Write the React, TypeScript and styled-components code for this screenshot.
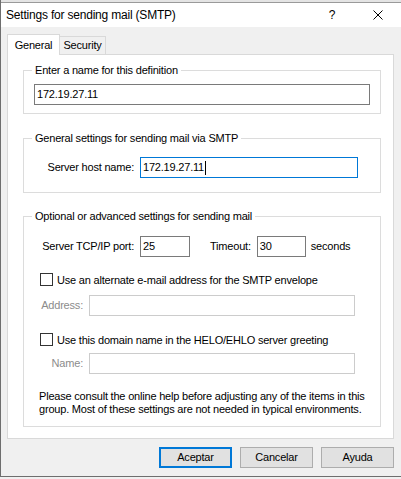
import React from "react";
import styled, { createGlobalStyle, css } from "styled-components";

const GlobalStyle = createGlobalStyle`
  *, *::before, *::after { box-sizing: border-box; }
  html, body { margin: 0; padding: 0; background: #f0f0f0; }
  body {
    font-family: "Liberation Sans", Arial, sans-serif;
    font-size: 11px;
    letter-spacing: -0.2px;
    color: #000;
  }
`;

const Screen = styled.div`
  width: 401px;
  height: 479px;
  overflow: hidden;
  background: #f0f0f0;
`;

const Window = styled.div`
  width: 401px;
  height: 477px;
  border-left: 1px solid #6e6e6e;
  border-bottom: 1px solid #6e6e6e;
  display: flex;
  flex-direction: column;
  background: #f0f0f0;
`;

const BackStrip = styled.div`
  height: 3px;
  background: #e4e4e4;
  border-bottom: 1px solid #9a9a9a;
`;

const TitleBar = styled.div`
  height: 24px;
  background: #fff;
  display: flex;
  align-items: center;
  padding-left: 5px;
`;

const Title = styled.div`
  flex: 1;
  font-size: 12px;
  line-height: 16px;
`;

const TitleButton = styled.div`
  width: 46px;
  height: 24px;
  display: flex;
  align-items: center;
  justify-content: center;
  font-size: 12px;
`;

const Body = styled.div`
  flex: 1;
  display: flex;
  flex-direction: column;
  padding: 7px 7px 8px 6px;
`;

const TabStrip = styled.div`
  display: flex;
  align-items: flex-end;
  height: 20px;
`;

const Tab = styled.div<{ $active?: boolean }>`
  display: flex;
  align-items: center;
  justify-content: center;
  border: 1px solid #d9d9d9;
  border-bottom: none;
  line-height: 13px;
  ${(p) =>
    p.$active
      ? css`
          width: 53px;
          height: 21px;
          margin-bottom: -1px;
          background: #fff;
          position: relative;
          z-index: 1;
        `
      : css`
          width: 46px;
          height: 18px;
          border-left: none;
          background: #f0f0f0;
        `}
`;

const Panel = styled.div`
  height: 385px;
  border: 1px solid #d9d9d9;
  background: #fff;
  padding: 9px 12px 0 15px;
  display: flex;
  flex-direction: column;
`;

const Group = styled.div<{ $gap?: number }>`
  margin-top: ${(p) => p.$gap ?? 0}px;
  display: flex;
  flex-direction: column;
`;

const GroupHeader = styled.div`
  display: flex;
  height: 13px;
  &::before,
  &::after {
    content: "";
    align-self: flex-end;
    height: 7px;
    border-top: 1px solid #dcdcdc;
  }
  &::before {
    width: 9px;
    border-left: 1px solid #dcdcdc;
  }
  &::after {
    flex: 1;
    border-right: 1px solid #dcdcdc;
  }
`;

const Caption = styled.span`
  padding: 0 3px;
  line-height: 13px;
`;

const GroupBody = styled.div<{ $pad: string }>`
  border: 1px solid #dcdcdc;
  border-top: none;
  padding: ${(p) => p.$pad};
  display: flex;
  flex-direction: column;
`;

const TextBox = styled.div<{ $w?: number; $kind?: "normal" | "focus" | "disabled" }>`
  width: ${(p) => (p.$w ? `${p.$w}px` : "100%")};
  height: 21px;
  background: #fff;
  border: 1px solid
    ${(p) => (p.$kind === "focus" ? "#0078d7" : p.$kind === "disabled" ? "#cccccc" : "#7a7a7a")};
  display: flex;
  align-items: center;
  padding-left: 2px;
  line-height: 13px;
  white-space: nowrap;
`;

const Caret = styled.span`
  display: inline-block;
  width: 1px;
  height: 14px;
  background: #000;
  margin-left: 1px;
`;

const FieldRow = styled.div<{ $mt?: number }>`
  display: flex;
  align-items: center;
  margin-top: ${(p) => p.$mt ?? 0}px;
`;

const FieldLabel = styled.span<{ $w?: number; $ml?: number; $muted?: boolean }>`
  ${(p) => (p.$w ? `width: ${p.$w}px; text-align: right;` : "")}
  margin-left: ${(p) => p.$ml ?? 0}px;
  margin-right: 6px;
  line-height: 13px;
  white-space: nowrap;
  color: ${(p) => (p.$muted ? "#8c8c8c" : "#000")};
`;

const Suffix = styled.span`
  margin-left: 5px;
  line-height: 13px;
`;

const CheckRow = styled.div<{ $mt?: number }>`
  display: flex;
  align-items: center;
  margin-top: ${(p) => p.$mt ?? 0}px;
  padding-left: 16px;
  height: 13px;
`;

const CheckBox = styled.span`
  width: 13px;
  height: 13px;
  border: 1px solid #333;
  background: #fff;
  margin-right: 4px;
  flex: none;
`;

const Note = styled.p<{ $mt?: number }>`
  margin: ${(p) => p.$mt ?? 0}px 0 0 0;
  padding-left: 15px;
  line-height: 13px;
`;

const ButtonRow = styled.div`
  display: flex;
  justify-content: flex-end;
  gap: 8px;
  margin-top: 8px;
`;

const Button = styled.div<{ $default?: boolean }>`
  width: 73px;
  height: 21px;
  display: flex;
  align-items: center;
  justify-content: center;
  background: #e1e1e1;
  border: ${(p) => (p.$default ? "2px solid #0078d7" : "1px solid #adadad")};
  line-height: 13px;
`;

const CloseIcon = () => (
  <svg width="10" height="10" viewBox="0 0 10 10">
    <path d="M0.5 0.5 L9.5 9.5 M9.5 0.5 L0.5 9.5" stroke="#000" strokeWidth="1" fill="none" />
  </svg>
);

export default function App() {
  return (
    <Screen>
      <GlobalStyle />
      <Window>
        <BackStrip />
        <TitleBar>
          <Title>Settings for sending mail (SMTP)</Title>
          <TitleButton>?</TitleButton>
          <TitleButton>
            <CloseIcon />
          </TitleButton>
        </TitleBar>
        <Body>
          <TabStrip>
            <Tab $active>General</Tab>
            <Tab>Security</Tab>
          </TabStrip>
          <Panel>
            <Group>
              <GroupHeader>
                <Caption>Enter a name for this definition</Caption>
              </GroupHeader>
              <GroupBody $pad="7px 10px 8px 10px">
                <TextBox>172.19.27.11</TextBox>
              </GroupBody>
            </Group>

            <Group $gap={18}>
              <GroupHeader>
                <Caption>General settings for sending mail via SMTP</Caption>
              </GroupHeader>
              <GroupBody $pad="12px 0 14px 0">
                <FieldRow>
                  <FieldLabel $w={110}>Server host name:</FieldLabel>
                  <TextBox $w={218} $kind="focus">
                    172.19.27.11
                    <Caret />
                  </TextBox>
                </FieldRow>
              </GroupBody>
            </Group>

            <Group $gap={17}>
              <GroupHeader>
                <Caption>Optional or advanced settings for sending mail</Caption>
              </GroupHeader>
              <GroupBody $pad="13px 0 10px 0">
                <FieldRow>
                  <FieldLabel $w={110}>Server TCP/IP port:</FieldLabel>
                  <TextBox $w={50}>25</TextBox>
                  <FieldLabel $ml={20}>Timeout:</FieldLabel>
                  <TextBox $w={49}>30</TextBox>
                  <Suffix>seconds</Suffix>
                </FieldRow>
                <CheckRow $mt={16}>
                  <CheckBox />
                  Use an alternate e-mail address for the SMTP envelope
                </CheckRow>
                <FieldRow $mt={9}>
                  <FieldLabel $w={59} $muted>
                    Address:
                  </FieldLabel>
                  <TextBox $w={266} $kind="disabled" />
                </FieldRow>
                <CheckRow $mt={17}>
                  <CheckBox />
                  Use this domain name in the HELO/EHLO server greeting
                </CheckRow>
                <FieldRow $mt={7}>
                  <FieldLabel $w={59} $muted>
                    Name:
                  </FieldLabel>
                  <TextBox $w={266} $kind="disabled" />
                </FieldRow>
                <Note $mt={16}>
                  Please consult the online help before adjusting any of the items in this
                  <br />
                  group. Most of these settings are not needed in typical environments.
                </Note>
              </GroupBody>
            </Group>
          </Panel>
          <ButtonRow>
            <Button $default>Aceptar</Button>
            <Button>Cancelar</Button>
            <Button>Ayuda</Button>
          </ButtonRow>
        </Body>
      </Window>
    </Screen>
  );
}
